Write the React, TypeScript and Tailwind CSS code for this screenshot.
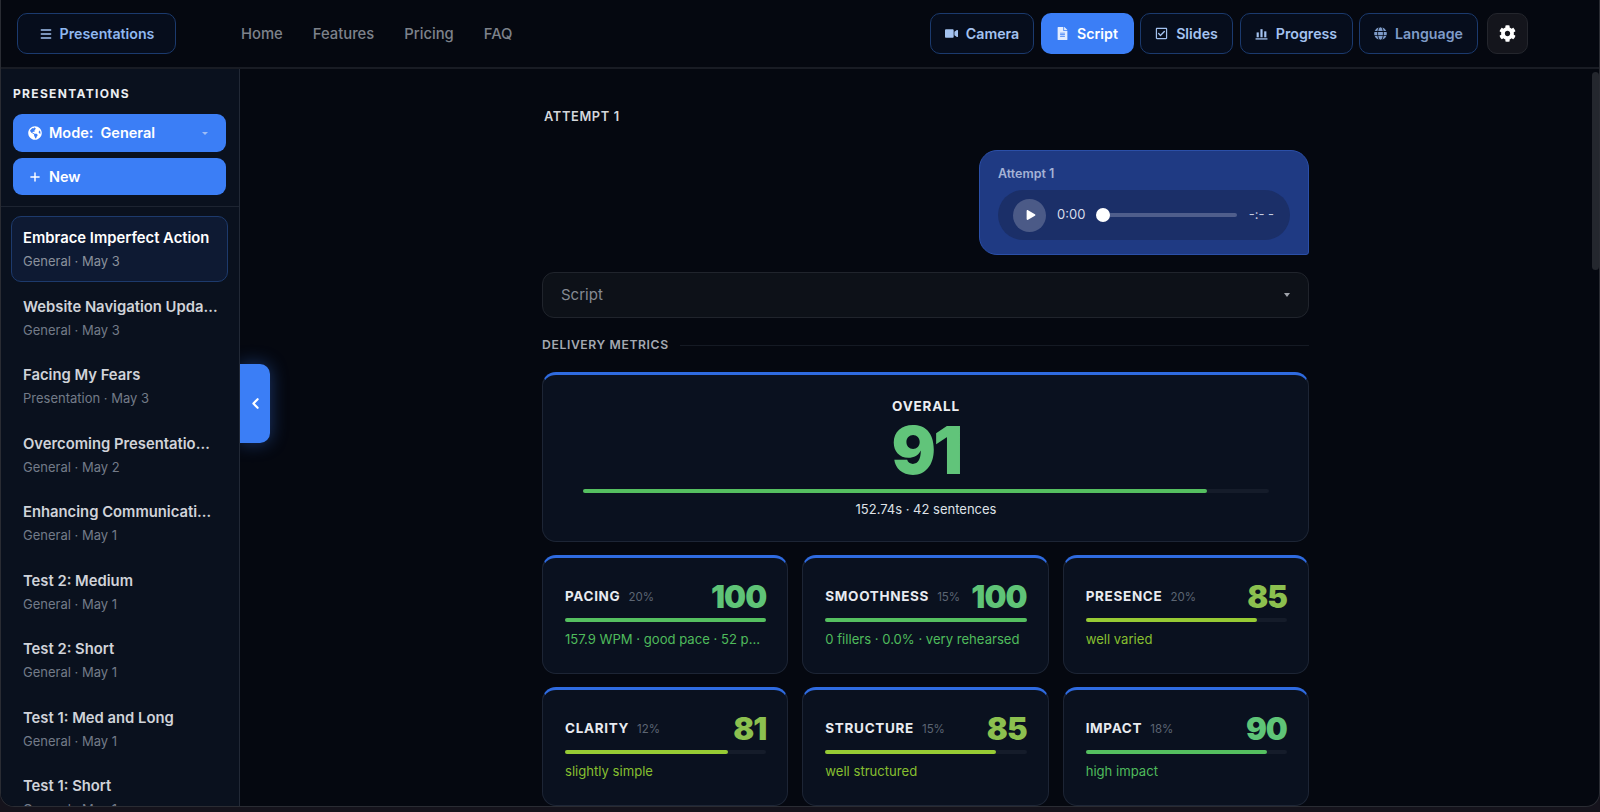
import { Menu, Plus, ChevronLeft } from "lucide-react";
import { FaVideo, FaFileAlt, FaRegCheckSquare, FaGlobe, FaCog, FaGlobeAmericas, FaPlay } from "react-icons/fa";
import type { ReactNode } from "react";

const presentations = [
  { title: "Website Navigation Update Notes", sub: "General · May 3" },
  { title: "Facing My Fears", sub: "Presentation · May 3" },
  { title: "Overcoming Presentation Anxiety", sub: "General · May 2" },
  { title: "Enhancing Communication Skills", sub: "General · May 1" },
  { title: "Test 2: Medium", sub: "General · May 1" },
  { title: "Test 2: Short", sub: "General · May 1" },
  { title: "Test 1: Med and Long", sub: "General · May 1" },
  { title: "Test 1: Short", sub: "General · May 1" },
];

const GREEN = { value: "text-[#5fc477]", bar: "bg-[#55c060]", note: "text-[#4fbb5c]" };
const LIME = { value: "text-[#8cc04f]", bar: "bg-[#97cb34]", note: "text-[#86bf2f]" };

const metrics = [
  { name: "PACING", weight: "20%", score: 100, note: "157.9 WPM · good pace · 52 pauses", tone: GREEN },
  { name: "SMOOTHNESS", weight: "15%", score: 100, note: "0 fillers · 0.0% · very rehearsed", tone: GREEN },
  { name: "PRESENCE", weight: "20%", score: 85, note: "well varied", tone: LIME },
  { name: "CLARITY", weight: "12%", score: 81, note: "slightly simple", tone: LIME },
  { name: "STRUCTURE", weight: "15%", score: 85, note: "well structured", tone: LIME },
  { name: "IMPACT", weight: "18%", score: 90, note: "high impact", tone: GREEN },
];

function BarsIcon() {
  return (
    <svg viewBox="0 0 12 12" className="h-[13px] w-[13px]" fill="currentColor">
      <rect x="1.5" y="5" width="2" height="4.5" />
      <rect x="5" y="2" width="2" height="7.5" />
      <rect x="8.5" y="4" width="2" height="5.5" />
      <rect x="0.5" y="10.4" width="11" height="1.2" />
    </svg>
  );
}

function NavButton({ icon, label, width, dim }: { icon: ReactNode; label: string; width: string; dim?: boolean }) {
  return (
    <button
      className={`flex h-[41px] items-center justify-center gap-[8px] rounded-[10px] border border-[#1b3a6e] bg-[#060d1c] text-[14.2px] font-semibold ${width} ${
        dim ? "text-[#7f9cc9]" : "text-[#a3c2f0]"
      }`}
    >
      {icon}
      {label}
    </button>
  );
}

function MetricCard({ name, weight, score, note, tone }: (typeof metrics)[number]) {
  return (
    <div className="h-[119px] rounded-[14px] border border-[#1d2535] border-t-[3px] border-t-[#2f6be0] bg-[#0a111f] pl-[22px] pr-[21px] pt-[23px]">
      <div className="flex h-[30px] items-center justify-between">
        <div className="flex items-baseline gap-[8px]">
          <span className="text-[13.5px] font-bold tracking-[0.05em] text-[#e8ebf0]">{name}</span>
          <span className="text-[11.5px] text-[#5c6573]">{weight}</span>
        </div>
        <span className={`text-[31px] leading-none font-black tracking-[-0.03em] ${tone.value}`}>{score}</span>
      </div>
      <div className="mt-[7px] h-[4px] rounded-full bg-[#151c2a]">
        <div className={`h-full rounded-full ${tone.bar}`} style={{ width: `${score}%` }} />
      </div>
      <p className={`mt-[7px] truncate text-[13.1px] leading-[20px] ${tone.note}`}>{note}</p>
    </div>
  );
}

export default function App() {
  return (
    <div className="h-[812px] w-[1600px] overflow-hidden bg-[#15131c] font-[Inter,sans-serif]">
      <div className="flex h-[807px] flex-col overflow-hidden rounded-b-[14px] border-x border-b border-[#2a2c33] bg-[#050810]">
        {/* top bar */}
        <header className="flex h-[69px] shrink-0 items-center border-b-2 border-[#191c24] pl-[16px] pr-[71px]">
          <button className="flex h-[41px] w-[159px] items-center justify-center gap-[7px] rounded-[10px] border border-[#1b3a6e] bg-[#060d1c] text-[14.2px] font-semibold text-[#8fb8f0]">
            <Menu className="h-[14px] w-[14px] text-[#a3c2f0]" strokeWidth={2.5} />
            Presentations
          </button>
          <nav className="ml-[65px] flex gap-[30px] pt-[1px] text-[14.8px] font-medium text-[#7d828b]">
            <a>Home</a>
            <a>Features</a>
            <a>Pricing</a>
            <a>FAQ</a>
          </nav>
          <div className="ml-auto flex items-center gap-[6.5px]">
            <NavButton icon={<FaVideo className="h-[13px] w-[13px]" />} label="Camera" width="w-[104px]" />
            <button className="flex h-[41px] w-[93px] items-center justify-center gap-[8px] rounded-[10px] bg-[#3b7ef6] text-[14.2px] font-semibold text-white">
              <FaFileAlt className="h-[13px] w-[13px] text-[#e3edff]" />
              Script
            </button>
            <NavButton icon={<FaRegCheckSquare className="h-[13px] w-[13px]" />} label="Slides" width="w-[93px]" />
            <NavButton icon={<BarsIcon />} label="Progress" width="w-[113px]" />
            <NavButton icon={<FaGlobe className="h-[13px] w-[13px]" />} label="Language" width="w-[119px]" dim />
            <button className="ml-[2.5px] flex h-[41px] w-[41px] items-center justify-center rounded-[10px] border border-[#24262d] bg-[#14151c] text-white">
              <FaCog className="h-[17px] w-[17px]" />
            </button>
          </div>
        </header>

        <div className="flex min-h-0 flex-1">
          {/* sidebar */}
          <aside className="w-[239px] shrink-0 overflow-hidden border-r border-[#222936] bg-[#0a111e]">
            <div className="border-b border-[#1d2431] pb-[11px] pl-[12px] pr-[13px] pt-[17px]">
              <h2 className="text-[12px] leading-[16px] font-bold tracking-[0.11em] text-[#eceef2]">PRESENTATIONS</h2>
              <button className="mt-[12px] flex h-[38px] w-full items-center rounded-[9px] bg-[#3b7ef6] pl-[15px] pr-[18px] text-[14.5px] font-semibold text-white">
                <FaGlobeAmericas className="h-[14px] w-[14px]" />
                <span className="ml-[7px]">Mode:</span>
                <span className="ml-[7px]">General</span>
                <span className="ml-auto h-0 w-0 border-x-[3.5px] border-t-[3.5px] border-x-transparent border-t-[#9dbcf5]" />
              </button>
              <button className="mt-[6px] flex h-[37px] w-full items-center rounded-[9px] bg-[#3b7ef6] pl-[15px] text-[14.5px] font-semibold text-white">
                <Plus className="h-[14px] w-[14px]" strokeWidth={2.5} />
                <span className="ml-[7px]">New</span>
              </button>
            </div>
            <div className="pl-[10px] pr-[11px] pt-[9px]">
              <div className="h-[66px] rounded-[10px] border border-[#1d3a6c] bg-[#0e1a33] px-[11px] pt-[11px]">
                <p className="truncate text-[14.8px] leading-[20px] font-semibold text-white">Embrace Imperfect Action</p>
                <p className="mt-[4px] text-[13px] leading-[18px] text-[#8a919c]">General · May 3</p>
              </div>
              {presentations.map((p) => (
                <div key={p.title} className="mt-[2.55px] h-[66px] pl-[12px] pr-[10px] pt-[12px]">
                  <p className="truncate text-[14.8px] leading-[20px] font-semibold text-[#d0d3d9]">{p.title}</p>
                  <p className="mt-[4px] text-[13px] leading-[18px] text-[#737b88]">{p.sub}</p>
                </div>
              ))}
            </div>
          </aside>

          {/* main */}
          <main className="relative min-w-0 flex-1 overflow-hidden pl-[302px]">
            <button className="absolute left-0 top-[295px] flex h-[79px] w-[30px] items-center justify-center rounded-r-[10px] bg-[#3b7ef6] text-white shadow-[0_0_18px_rgba(59,126,246,0.4)]">
              <ChevronLeft className="h-[17px] w-[17px]" strokeWidth={3} />
            </button>
            <div className="absolute right-0 top-[3px] h-[198px] w-[7px] rounded-full bg-[#24272e]" />

            <div className="w-[767px]">
              <h3 className="ml-[2px] mt-[39px] text-[12.8px] leading-[18px] font-semibold tracking-[0.05em] text-[#d4d7dc]">ATTEMPT 1</h3>
              <div className="mt-[24px] flex justify-end">
                <div className="h-[105px] w-[330px] rounded-[18px] rounded-br-[3px] border border-[#2b4fa8] bg-[#1f3a83] px-[18px] pt-[14px]">
                  <p className="text-[12.5px] leading-[18px] font-semibold text-[#a5b3d6]">Attempt 1</p>
                  <div className="mt-[7px] flex h-[50px] items-center rounded-full bg-[#1b2f68] pl-[15px] pr-[16px]">
                    <span className="flex h-[33px] w-[33px] items-center justify-center rounded-full bg-[#4b5a87] text-white">
                      <FaPlay className="ml-[2px] h-[10px] w-[10px]" />
                    </span>
                    <span className="ml-[11px] text-[13px] text-[#d7dcea]">0:00</span>
                    <span className="relative ml-[12px] h-[4px] w-[140px] rounded-full bg-[#4f5e8c]">
                      <span className="absolute -left-[1px] -top-[5px] h-[14px] w-[14px] rounded-full bg-white" />
                    </span>
                    <span className="ml-auto text-[13px] text-[#c3cbe0]">-:- -</span>
                  </div>
                </div>
              </div>

              <div className="mt-[17px] flex h-[46px] items-center justify-between rounded-[12px] border border-[#20242c] bg-[#0d1118] pb-[-1px] pl-[18px] pr-[18px]">
                <span className="pt-[1px] text-[15px] text-[#858a93]">Script</span>
                <span className="h-0 w-0 border-x-[3px] border-t-[4px] border-x-transparent border-t-[#a0a4ab]" />
              </div>

              <div className="mt-[18px] flex h-[18px] items-center gap-[11px]">
                <span className="text-[12.2px] font-semibold tracking-[0.05em] text-[#a4a9b2]">DELIVERY METRICS</span>
                <span className="h-px flex-1 bg-[#151a24]" />
              </div>

              {/* overall */}
              <div className="mt-[18px] h-[170px] rounded-[14px] border border-[#1d2535] border-t-[3px] border-t-[#2f6be0] bg-[#0a111f] pl-[40px] pr-[39px] pt-[22px] text-center">
                <p className="text-[13.5px] leading-[18px] font-bold tracking-[0.06em] text-[#eceef2]">OVERALL</p>
                <p className="mt-[3px] text-[66px] leading-[64px] font-black tracking-[-0.04em] text-[#61c47a]">91</p>
                <div className="mt-[7px] h-[4px] rounded-full bg-[#151c2a]">
                  <div className="h-full rounded-full bg-[#55c060]" style={{ width: "91%" }} />
                </div>
                <p className="mt-[6px] text-[13px] leading-[20px] text-[#dfe2e7]">152.74s · 42 sentences</p>
              </div>

              <div className="mt-[13px] grid grid-cols-3 gap-x-[14px] gap-y-[13px]">
                {metrics.map((m) => (
                  <MetricCard key={m.name} {...m} />
                ))}
              </div>
            </div>
          </main>
        </div>
      </div>
    </div>
  );
}
